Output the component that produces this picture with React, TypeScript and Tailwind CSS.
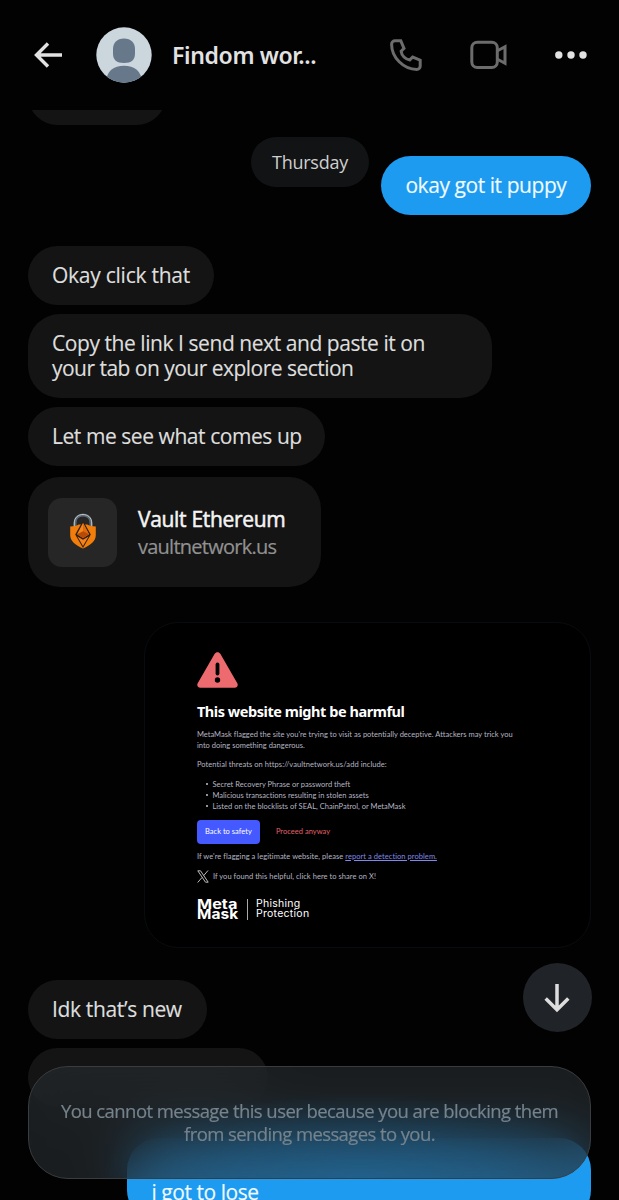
import React from "react";

function Bubble({ children, className = "" }: { children?: React.ReactNode; className?: string }) {
  return (
    <div className={`shrink-0 whitespace-nowrap px-6 py-[17px] text-[21px] leading-[25px] [-webkit-text-stroke:0.15px] ${className}`}>
      {children}
    </div>
  );
}

function Header() {
  return (
    <header className="flex h-[110px] shrink-0 items-center pl-[34px] pr-[32px]">
      <svg width="29" height="26" viewBox="0 0 29 26" fill="none" stroke="#e2e2e2" strokeWidth="3.4">
        <path d="M28 13H2.5M14 1.5 2.5 13 14 24.5" />
      </svg>
      <svg className="ml-[33px]" width="56" height="56" viewBox="0 0 56 56">
        <defs>
          <clipPath id="avatar">
            <circle cx="28" cy="28" r="27.7" />
          </clipPath>
        </defs>
        <g clipPath="url(#avatar)">
          <rect width="56" height="56" fill="#ccd6dd" />
          <path d="M28 11.500c7 0 11 4.200 11 10.500v4.500c0 6.500-3.500 9.500-11 9.500s-11-3-11-9.500V22c0-6.300 4-10.500 11-10.500z" fill="#66788a" />
          <path d="M10 56c0-12 8-17.200 18-17.200S46 44 46 56z" fill="#66788a" />
        </g>
      </svg>
      <h1 className="ml-5 w-[218px] whitespace-nowrap font-['Noto_Sans'] text-[23px] font-semibold leading-[30px] tracking-[-0.35px] text-[#e2e2e2]">
        Findom wor...
      </h1>
      <svg width="32" height="32" viewBox="0 0 32 32" fill="none" stroke="#6c6c6c" strokeWidth="3">
        <path d="M5 1.800h5.800l3.200 7.500-2.900 2.900c.4 4.400 4.300 8.300 8.700 8.700l2.900-2.900 7.500 3.200V27c0 1.900-1.500 3.400-3.400 3.400C13.500 30.400 1.600 18.500 1.600 5.200 1.600 3.300 3.100 1.800 5 1.800z" />
      </svg>
      <svg className="ml-12" width="38" height="30" viewBox="0 0 38 30" fill="none" stroke="#6c6c6c" strokeWidth="3">
        <rect x="1.800" y="2.200" width="25.500" height="25.400" rx="5.500" />
        <path d="m27.500 10.800 7.500-4v16.400l-7.500-4" />
      </svg>
      <svg className="ml-[47px]" width="32" height="8" viewBox="0 0 32 8" fill="#e2e2e2">
        <circle cx="3.800" cy="4" r="3.700" />
        <circle cx="16" cy="4" r="3.700" />
        <circle cx="28" cy="4" r="3.700" />
      </svg>
    </header>
  );
}

function VaultIcon() {
  return (
    <svg width="30" height="40" viewBox="0 0 30 40">
      <path d="M7 17v-6C7 6 10.500 3 15 3s8 3 8 8v6" fill="none" stroke="#5d6870" strokeWidth="3" />
      <path d="M6.300 16v-5c0-5.300 4-8.500 8.700-8.500s8.700 3.200 8.700 8.500v5" fill="none" stroke="#bcc6cb" strokeWidth="1" />
      <path d="M2.200 14.500c3.500 0 7-1 8.500-2h8.600c1.500 1 5 2 8.500 2V23c0 6-5 10-12.800 13.500C7.200 33 2.200 29 2.200 23z" fill="#f17d0b" />
      <path d="M15 8.800 7.200 22.500 15 36l7.800-13.500z" fill="#30200f" />
      <path d="M15 11 9 22.300l6 3.700 6-3.700z" fill="#f5861c" />
      <path d="M15 11v15l6-3.700z" fill="#e0690d" />
      <path d="m9 22.300 6-3 6 3-6 3.700z" fill="#b84a08" />
      <path d="M9.400 24.500 15 27.800l5.600-3.300L15 34z" fill="#f5811b" />
    </svg>
  );
}

function LinkCard() {
  return (
    <div className="mt-[11px] flex h-[110px] w-[293px] shrink-0 items-center rounded-[32px] bg-[#141414] pl-5">
      <div className="flex h-[69px] w-[69px] items-center justify-center rounded-[14px] bg-[#262626]">
        <VaultIcon />
      </div>
      <div className="ml-[21px] mt-px whitespace-nowrap leading-[27px]">
        <div className="text-[21px] tracking-[-0.32px] text-[#f4f4f4] [-webkit-text-stroke:0.5px]">Vault Ethereum</div>
        <div className="text-[20px] tracking-[-0.75px] text-[#919191] [-webkit-text-stroke:0.2px]">vaultnetwork.us</div>
      </div>
    </div>
  );
}

function WarningShot() {
  return (
    <div className="mt-[35px] h-[326px] w-[447px] shrink-0 self-end whitespace-nowrap rounded-[34px] border border-[#090c0f] bg-black pl-[51.5px] pt-[28px] font-['Lato'] text-[7.500px] leading-[11px] tracking-[0.02px] text-[#b5b6c4]">
      <svg className="block" width="41" height="38" viewBox="0 0 41 38">
        <path d="M17.700 2.800c1.200-2.100 4.400-2.100 5.600 0l17 29.400c1.200 2-.3 4.600-2.700 4.600H3.400c-2.400 0-3.900-2.600-2.700-4.600z" fill="#ed6a6e" />
        <path d="M20.500 13.500v9" stroke="#000" strokeWidth="3.800" strokeLinecap="round" />
        <circle cx="20.500" cy="29" r="2.700" fill="#000" />
      </svg>
      <h2 className="mt-[12px] font-['Noto_Sans'] text-[14.500px] font-bold leading-[20px] tracking-[-0.45px] text-white">This website might be harmful</h2>
      <p className="mt-[8px]">
        MetaMask flagged the site you're trying to visit as potentially deceptive. Attackers may trick you
        <br />
        into doing something dangerous.
      </p>
      <p className="mt-[8px] tracking-[0.07px]">Potential threats on https://vaultnetwork.us/add include:</p>
      <ul className="mt-[8.500px] pl-[9px]">
        {[
          "Secret Recovery Phrase or password theft",
          "Malicious transactions resulting in stolen assets",
          "Listed on the blocklists of SEAL, ChainPatrol, or MetaMask",
        ].map((item) => (
          <li key={item} className="flex items-center">
            <span className="mr-1 h-[2.500px] w-[2.500px] rounded-full bg-[#c5c5d0]" />
            {item}
          </li>
        ))}
      </ul>
      <div className="mt-[8px] flex items-center">
        <div className="flex h-[24px] w-[63px] items-center justify-center rounded-[4px] bg-[#4459ff] text-white">Back to safety</div>
        <span className="ml-4 text-[#e0626b]">Proceed anyway</span>
      </div>
      <p className="mt-[7px] tracking-[0.06px]">
        If we're flagging a legitimate website, please <span className="text-[#8089e8] underline">report a detection problem.</span>
      </p>
      <div className="mt-[8px] flex items-center">
        <svg width="12" height="13" viewBox="0 0 12 13" fill="none" stroke="#d0d0d0" strokeWidth="0.900">
          <path d="M.8.800h2.700l7.700 11.400H8.500zM11 .5 6.800 5.500M5 7.500.7 12.500" />
        </svg>
        <span className="ml-1 tracking-[0.05px]">If you found this helpful, click here to share on X!</span>
      </div>
      <div className="mt-[16px] flex items-center text-white">
        <div className="w-[41px] font-['Inter'] text-[13px] font-bold leading-[10.500px]">
          <div className="w-fit origin-left scale-x-[1.25]">Meta</div>
          <div className="w-fit origin-left scale-x-[1.19]">Mask</div>
        </div>
        <div className="ml-[9px] h-[21px] w-px bg-[#aaa]" />
        <div className="ml-2 font-['Inter'] text-[10.500px] leading-[10.500px] tracking-[0.28px]">
          Phishing
          <br />
          Protection
        </div>
      </div>
    </div>
  );
}

export default function App() {
  return (
    <div className="relative flex h-[1200px] w-[619px] flex-col overflow-hidden bg-[#020202] font-['Open_Sans'] text-[#dedede]">
      <Header />
      <main className="flex min-h-0 flex-1 flex-col items-start overflow-hidden pl-7 pr-[27.600px] tracking-[-0.44px]">
        <Bubble className="mt-[-44px] h-[59px] w-[138px] rounded-[30px] bg-[#141414]" />
        <Bubble className="mt-[31px] w-[210px] self-end rounded-[30px] bg-[#1d9bf0] text-[#f0faff]">okay got it puppy</Bubble>
        <Bubble className="mt-[31px] w-[186px] rounded-[30px] bg-[#141414] tracking-[-0.25px]">Okay click that</Bubble>
        <Bubble className="mt-[9px] w-[464px] rounded-[32px] bg-[#141414]">
          Copy the link I send next and paste it on
          <br />
          <span className="tracking-[-0.52px]">your tab on your explore section</span>
        </Bubble>
        <Bubble className="mt-[9px] w-[297px] rounded-[30px] bg-[#141414]">Let me see what comes up</Bubble>
        <LinkCard />
        <WarningShot />
        <Bubble className="mt-[32px] w-[179px] rounded-[30px] bg-[#141414] tracking-[-0.35px]">Idk that’s new</Bubble>
        <Bubble className="mt-[9px] h-[59px] w-[240px] rounded-[30px] bg-[#141414]" />
        <Bubble className="mt-[31px] w-[464px] self-end rounded-[32px] bg-[#1d9bf0] text-[#f0faff]">
          <br />i got to lose
        </Bubble>
      </main>
      <div className="absolute left-[251px] top-[137px] flex h-[50px] w-[118px] items-center justify-center rounded-full bg-[#121315] text-[18px] tracking-[-0.25px] text-[#cfcfcf]">
        Thursday
      </div>
      <div className="absolute left-[522.500px] top-[963px] flex h-[69px] w-[69px] items-center justify-center rounded-full bg-[#202327]">
        <svg width="26" height="30" viewBox="0 0 26 30" fill="none" stroke="#dddddd" strokeWidth="3.500">
          <path d="M13 1v26M1.700 15.500 13 26.800l11.300-11.300" />
        </svg>
      </div>
      <div className="absolute left-[28px] top-[1066px] flex h-[113px] w-[563px] items-center justify-center whitespace-nowrap rounded-[40px] border border-[#3a3d3f] bg-[#282c2f]/65 bg-[radial-gradient(ellipse_260px_85px_at_59%_100%,#1d9bf038,#1d9bf026_50%,transparent)] pb-[2px] text-center text-[18.500px] leading-[23px] tracking-[-0.56px] text-[#75838d] [-webkit-text-stroke:0.2px] backdrop-blur-[28px]">
        <span>
          You cannot message this user because you are blocking them
          <br />
          <span className="tracking-[-0.600px]">from sending messages to you.</span>
        </span>
      </div>
    </div>
  );
}
